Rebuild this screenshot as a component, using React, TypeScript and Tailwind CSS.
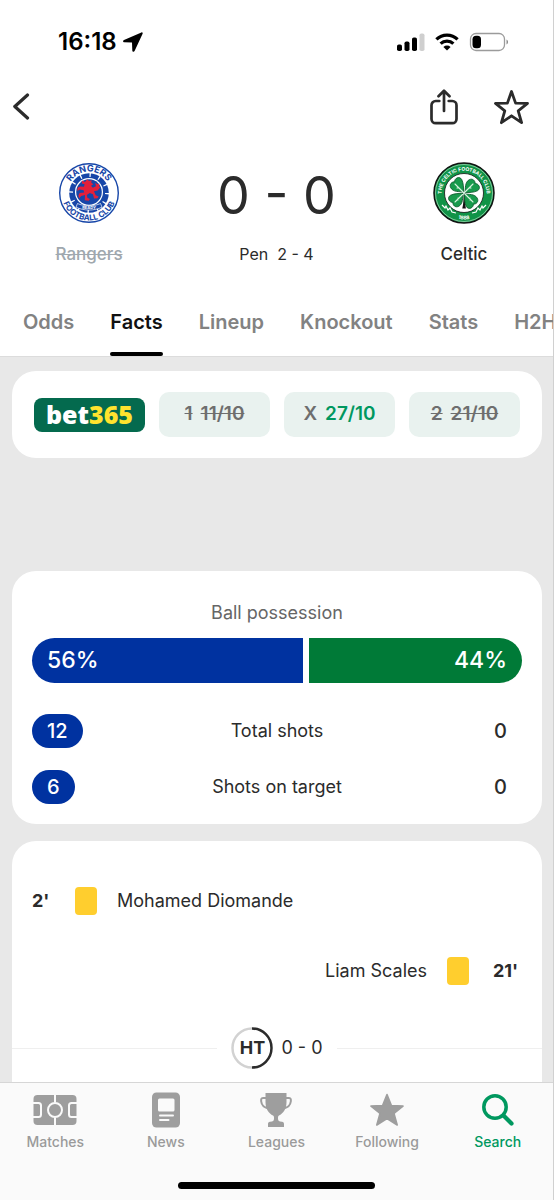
import type { ReactNode } from "react";

const tabs = ["Odds", "Facts", "Lineup", "Knockout", "Stats", "H2H"];

const odds = [
  { label: "1", value: "11/10", lost: true },
  { label: "X", value: "27/10", lost: false },
  { label: "2", value: "21/10", lost: true },
];

const stats = [
  { label: "Total shots", home: 12, away: 0 },
  { label: "Shots on target", home: 6, away: 0 },
];

function StatusBar() {
  return (
    <div className="flex h-20 items-center justify-between pt-1 pr-11 pl-[58px] text-black">
      <div className="flex items-center gap-1.5">
        <span className="text-2xl font-semibold">16:18</span>
        <svg width="20" height="20" viewBox="0 0 20 20" fill="currentColor">
          <path d="M18.400.4 1 8c-1.400.7-1.100 2.200.4 2.300l7.600.3.300 7.800c.1 1.500 1.700 1.700 2.400.4L19.600 1.700C20 .8 19.300 0 18.400.4z" />
        </svg>
      </div>
      <div className="flex items-center gap-2.5">
        <svg width="30" height="20" viewBox="0 0 30 20">
          <rect x="2" y="12.5" width="5" height="6.500" rx="1.800" />
          <rect x="9.500" y="9.500" width="5" height="9.500" rx="1.800" />
          <rect x="17" y="5.500" width="5" height="13.500" rx="1.800" />
          <rect x="24.500" y="1.500" width="5" height="17.500" rx="1.800" fill="#cfcfcf" />
        </svg>
        <svg width="24" height="20" viewBox="0 0 24 20">
          <g fill="none" stroke="currentColor" strokeWidth="3.200">
            <path d="M1.400 7.400a15.200 15.200 0 0 1 21.200 0" />
            <path d="M5.600 11.700a9.200 9.200 0 0 1 12.800 0" />
          </g>
          <path d="M12 18.500 8.400 15a5.200 5.200 0 0 1 7.200 0z" />
        </svg>
        <svg width="40" height="20" viewBox="0 0 40 20">
          <rect x="1.500" y="1.500" width="34" height="17" rx="5.500" fill="none" stroke="#9b9b9b" strokeWidth="1.300" />
          <rect x="3.500" y="3.700" width="8.500" height="12.600" rx="3.500" />
          <path d="M37.500 7.500c2 .8 2 4.200 0 5z" fill="#8a8a8a" />
        </svg>
      </div>
    </div>
  );
}

function Toolbar() {
  return (
    <div className="flex h-[54px] items-center justify-between pr-6 pl-3 text-[#2b2b2b]">
      <button aria-label="Back">
        <svg width="18" height="28" viewBox="0 0 18 28" fill="none" stroke="currentColor" strokeWidth="3.200" strokeLinecap="round" strokeLinejoin="round">
          <path d="M15.500 2 2.800 13.500 15.500 25" />
        </svg>
      </button>
      <div className="flex items-center gap-9">
        <button aria-label="Share">
          <svg width="28" height="36" viewBox="0 0 28 36" fill="none" stroke="currentColor" strokeWidth="2.700" strokeLinecap="round" strokeLinejoin="round">
            <path d="M9.300 12H5.700A4.200 4.200 0 0 0 1.500 16.200v13.800a4.200 4.200 0 0 0 4.200 4.200h16.600a4.200 4.200 0 0 0 4.200-4.200V16.200a4.200 4.200 0 0 0-4.200-4.200h-3.600" />
            <path d="M14 22V2M8.500 7.300 14 1.700l5.500 5.600" />
          </svg>
        </button>
        <button aria-label="Follow match">
          <svg width="35" height="36" viewBox="0 0 35 36" fill="none" stroke="currentColor" strokeWidth="2.800" strokeLinejoin="round">
            <path d="m17.500 2.500 4.100 11.600 11.900.3-9.300 7.400 3.400 11.900-10.100-6.900-10.100 6.900 3.400-11.900-9.300-7.400 11.900-.3z" />
          </svg>
        </button>
      </div>
    </div>
  );
}

function RangersCrest() {
  return (
    <svg width="62" height="62" viewBox="0 0 62 62" role="img" aria-label="Rangers crest">
      <defs>
        <path id="rangersTop" d="M9.500 31a21.500 21.500 0 0 1 43 0" />
        <path id="rangersBottom" d="M3.500 31a27.500 27.500 0 0 0 55 0" />
      </defs>
      <circle cx="31" cy="31" r="29.300" fill="#fff" stroke="#1746a8" strokeWidth="1.400" />
      <circle cx="31" cy="31" r="19.800" fill="#1746a8" />
      <circle cx="31" cy="31" r="18" fill="none" stroke="#fff" strokeWidth="4" strokeDasharray="1.300 8.124" />
      <circle cx="31" cy="30" r="14" fill="#fff" />
      <circle cx="31" cy="30" r="12.800" fill="#1746a8" />
      <path
        fill="#e3203a"
        transform="translate(31 30) scale(1.15) translate(-31 -30)"
        d="m25 20 2.500 1.200 2-2.200 1.500 1.500 2.300-.8-.3 2.300 1.800 1.200-2 1.300 1.500 1.700 2.700-1.200-.5-3 2 1.300 1.600-.7-.5 2.200 1.200 1-2.300 3-3.200.6 1.500 3.400 2.600 1.200-1 1.400-3 .2-1-3.600-2.700-1.200-2.600 1.800.5 2.500 2.200 1-1 1.400-3.500-.3.200-4.500-3.300.8-1.700 2-.7-2.500 1-2.200 4-.3-.5-2-3.300-.6-2.200 1.200.3-2.800 2.200-1 3.300.2.600-2.200-2.500-.8z"
      />
      <path d="M19.500 41.500c6 3 17 3 23 0l1.500 3.700c-8 3.800-18 3.800-26 0z" fill="#1746a8" stroke="#fff" strokeWidth=".7" />
      <text x="31" y="47" textAnchor="middle" className="fill-white font-[Inter] text-[4px] font-bold">READY</text>
      <g className="fill-[#1746a8] font-[Inter] font-bold">
        <text textAnchor="middle" className="text-[9px]"><textPath href="#rangersTop" startOffset="50%">RANGERS</textPath></text>
        <text textAnchor="middle" className="text-[8px]"><textPath href="#rangersBottom" startOffset="50%">FOOTBALL CLUB</textPath></text>
      </g>
    </svg>
  );
}

function CelticCrest() {
  // one heart-shaped leaf, its point at the origin
  const leaf = "M0-1C-4-3-10-4-11-9c-.6-4 3-5.500 5.500-4.500C-4.500-17 1-18 2-13.500 2.600-9 1-5 0-1z";
  return (
    <svg width="62" height="62" viewBox="0 0 62 62" role="img" aria-label="Celtic crest">
      <defs>
        <path id="celticTop" d="M9 36a22.500 22.500 0 1 1 44 0" />
        <path id="celticBottom" d="M4.500 31a26.500 26.500 0 0 0 53 0" />
      </defs>
      <circle cx="31" cy="31" r="30" fill="#109347" stroke="#111" strokeWidth="1.500" />
      <circle cx="31" cy="31" r="28.500" fill="none" stroke="#c9ead2" strokeWidth=".6" />
      <circle cx="31" cy="31" r="19.500" fill="#fff" stroke="#111" strokeWidth=".8" />
      <path d="M30.600 33c-.2 5 0 8-1.300 13.500h3.600C31.800 41 32 37 31.500 33z" fill="#111" />
      <g fill="#189a4c" stroke="#0b5a2b" strokeWidth=".8">
        <path d={leaf} transform="translate(31 31) rotate(-18)" />
        <path d={leaf} transform="translate(31 31) rotate(72)" />
        <path d={leaf} transform="translate(31 31) rotate(162)" />
        <path d={leaf} transform="translate(31 31) rotate(252)" />
      </g>
      <g stroke="#d8f3df" strokeWidth="1.100" strokeLinecap="round">
        <path d="M22 22l18 18M40 22 22 40M24 26l2 0M38 26h-2M25 38v-2M37 38v-2" />
      </g>
      <path d="m9 43 3 3 1-2 2 4 2-2 2 4 4 1M53 43l-3 3-1-2-2 4-2-2-2 4-4 1" fill="none" stroke="#fff" strokeWidth="1.200" />
      <g className="fill-white font-[Inter] text-[5px] font-bold">
        <text textAnchor="middle"><textPath href="#celticTop" startOffset="50%">THE CELTIC FOOTBALL CLUB</textPath></text>
        <text textAnchor="middle"><textPath href="#celticBottom" startOffset="50%">1888</textPath></text>
      </g>
    </svg>
  );
}

function Score() {
  return (
    <div className="flex items-start justify-between px-[39px] pt-7 text-[#2b2b2b]">
      <div className="flex w-25 flex-col items-center gap-4">
        <RangersCrest />
        <span className="text-[17px] leading-7 font-medium text-[#a0a8ae] line-through">Rangers</span>
      </div>
      <div className="flex flex-col items-center gap-4 pt-1">
        <span className="text-[52px] leading-15">0 - 0</span>
        <span className="text-base whitespace-pre">Pen  2 - 4</span>
      </div>
      <div className="flex w-25 flex-col items-center gap-4">
        <CelticCrest />
        <span className="text-[17px] leading-7 font-medium">Celtic</span>
      </div>
    </div>
  );
}

function Tabs() {
  return (
    <nav className="mt-5 flex gap-9 overflow-hidden border-b border-[#dcdcdc] px-[23px]">
      {tabs.map((tab) =>
        tab === "Facts" ? (
          <button key={tab} className="flex h-17 shrink-0 flex-col items-center justify-between pt-5 text-xl font-semibold text-[#111]">
            {tab}
            <span className="h-1 w-full rounded-full bg-black"></span>
          </button>
        ) : (
          <button key={tab} className="flex h-17 shrink-0 pt-5 text-xl font-semibold text-[#828282]">
            {tab}
          </button>
        )
      )}
    </nav>
  );
}

function Odds() {
  return (
    <section className="flex items-center gap-3.5 rounded-3xl bg-white px-[22px] py-[21px]">
      <a href="#bet365" className="flex h-[34px] w-[111px] items-center justify-center rounded-lg bg-[#046a4e] font-['Noto_Sans'] text-[25px] font-black text-white">
        bet<span className="text-[#ffe32e]">365</span>
      </a>
      {odds.map((odd) => (
        <button key={odd.label} className="flex h-[45px] flex-1 items-center justify-center gap-2 rounded-[10px] bg-[#e9f2ef] text-[19px] font-semibold text-[#6e6e6e]">
          <span className={odd.lost ? "line-through" : ""}>{odd.label}</span>
          <span className={odd.lost ? "line-through" : "text-[#00985f]"}>{odd.value}</span>
        </button>
      ))}
    </section>
  );
}

function Stats() {
  return (
    <section className="mt-[113px] rounded-3xl bg-white px-5 pt-7 pb-5">
      <h2 className="text-center text-lg text-[#666]">Ball possession</h2>
      <div className="mt-[11px] flex h-[45px] gap-1.5 text-[23px] font-medium text-white">
        <div className="flex items-center rounded-l-full bg-[#0032a0] pl-[15px]" style={{ width: "56%" }}>56%</div>
        <div className="flex items-center justify-end rounded-r-full bg-[#007a37] pr-[15px]" style={{ width: "44%" }}>44%</div>
      </div>
      <div className="mt-[31px] flex flex-col gap-[22px] text-[#2b2b2b]">
        {stats.map((stat) => (
          <div key={stat.label} className="grid grid-cols-[1fr_auto_1fr] items-center">
            <span className="justify-self-start rounded-full bg-[#0032a0] px-[15px] text-xl leading-[34px] font-medium text-white">
              {stat.home}
            </span>
            <span className="text-lg">{stat.label}</span>
            <span className="justify-self-end pr-[15px] text-xl font-medium">{stat.away}</span>
          </div>
        ))}
      </div>
    </section>
  );
}

function Events() {
  return (
    <section className="mt-[17px] h-80 rounded-3xl bg-white pt-11 text-lg text-[#2b2b2b]">
      <div className="flex h-8 items-center gap-5 px-5">
        <strong className="w-[23px] font-bold">2'</strong>
        <span className="h-7 w-[22px] rounded bg-[#ffce2e]"></span>
        <span>Mohamed Diomande</span>
      </div>
      <div className="mt-[38px] flex h-8 items-center justify-end gap-5 px-5">
        <span>Liam Scales</span>
        <span className="h-7 w-[22px] rounded bg-[#ffce2e]"></span>
        <strong className="w-[33px] text-center font-bold">21'</strong>
      </div>
      <div className="mt-10 flex items-center">
        <span className="h-px flex-1 bg-[#efefef]"></span>
        <div className="flex items-center gap-2 px-3.5">
          <div className="grid size-[42px] place-items-center">
            <svg className="col-start-1 row-start-1" width="42" height="42" viewBox="0 0 42 42" fill="none" strokeWidth="2.500">
              <path d="M21 1.500a19.500 19.500 0 0 0 0 39" stroke="#d2d2d2" />
              <path d="M21 1.500a19.500 19.500 0 0 1 0 39" stroke="#2b2b2b" />
            </svg>
            <strong className="col-start-1 row-start-1 font-bold">HT</strong>
          </div>
          <span className="text-lg">0 - 0</span>
        </div>
        <span className="h-px flex-1 bg-[#efefef]"></span>
      </div>
    </section>
  );
}

function NavItem({ label, active, children }: { label: string; active?: boolean; children: ReactNode }) {
  return (
    <a href={`#${label}`} className={`flex flex-1 flex-col items-center gap-1 font-medium ${active ? "text-[#00985f]" : "text-[#9a9a9a]"}`}>
      <span className="flex h-9 items-center">{children}</span>
      <span className="text-sm">{label}</span>
    </a>
  );
}

function BottomNav() {
  return (
    <footer className="flex h-[118px] shrink-0 flex-col justify-between border-t border-[#d6d6d6] bg-[#fafafa] pt-[9px] pb-[11px]">
      <nav className="flex">
        <NavItem label="Matches">
          <svg width="44" height="30" viewBox="0 0 44 30">
            <rect x=".5" y="0" width="43" height="30" rx="4" fill="#9e9e9e" />
            <g fill="none" stroke="#fafafa" strokeWidth="2">
              <path d="M22 0v7.500M22 22.500V30M0 8h5.500a2.500 2.500 0 0 1 2.500 2.500v9A2.500 2.500 0 0 1 5.500 22H0M44 8h-5.500a2.500 2.500 0 0 0-2.500 2.500v9a2.500 2.500 0 0 0 2.500 2.500H44" />
              <circle cx="22" cy="15" r="7" />
            </g>
          </svg>
        </NavItem>
        <NavItem label="News">
          <svg width="28" height="36" viewBox="0 0 28 36">
            <rect y=".5" width="28" height="35" rx="4.500" fill="#9e9e9e" />
            <g fill="#fafafa">
              <rect x="6" y="6.500" width="16.500" height="13" rx="1.500" />
              <rect x="7" y="22.500" width="15" height="2" rx="1" />
              <rect x="7" y="27" width="10.500" height="2" rx="1" />
            </g>
          </svg>
        </NavItem>
        <NavItem label="Leagues">
          <svg width="32" height="34" viewBox="0 0 32 34">
            <path d="M5.500 0h21v9c0 7.500-3.500 11.500-7.500 13.500-1 .5-1 1.500-1 3 0 2.300 1 3 4 3.200 1.500.1 2 1 2 2.300v3H8v-3c0-1.300.5-2.200 2-2.300 3-.2 4-.9 4-3.200 0-1.500 0-2.500-1-3C9 20.500 5.500 16.500 5.500 9z" fill="#9e9e9e" />
            <path d="M6.500 5H3C1 5 1 6.500 1.200 8.500c.4 3.500 2.800 6 7.300 7M25.500 5H29c2 0 2 1.500 1.800 3.500-.4 3.500-2.800 6-7.300 7" fill="none" stroke="#9e9e9e" strokeWidth="2" />
          </svg>
        </NavItem>
        <NavItem label="Following">
          <svg width="34" height="34" viewBox="0 0 34 34" fill="#9e9e9e" stroke="#9e9e9e" strokeWidth="1.600" strokeLinejoin="round">
            <path d="m17 1.500 4.400 11 11.600.6-9 7.400 3.200 11.500L17 25.500 6.800 32 10 20.500 1 13.100l11.600-.6z" />
          </svg>
        </NavItem>
        <NavItem label="Search" active>
          <svg width="32" height="32" viewBox="0 0 32 32" fill="none" stroke="currentColor" strokeLinecap="round">
            <circle cx="13" cy="13" r="11.200" strokeWidth="3.500" />
            <path d="m21.500 21.500 8 8" strokeWidth="4.200" />
          </svg>
        </NavItem>
      </nav>
      <div className="mx-auto h-[7px] w-[197px] rounded-full bg-black"></div>
    </footer>
  );
}

export default function App() {
  return (
    <div className="flex h-screen flex-col border-r border-[#d0d0d0] bg-white font-[Inter,sans-serif]">
      <header className="shrink-0">
        <StatusBar />
        <Toolbar />
        <Score />
        <Tabs />
      </header>
      <main className="min-h-0 flex-1 overflow-hidden bg-[#e8e8e8] pt-3.5 pr-[11px] pl-3">
        <Odds />
        <Stats />
        <Events />
      </main>
      <BottomNav />
    </div>
  );
}
